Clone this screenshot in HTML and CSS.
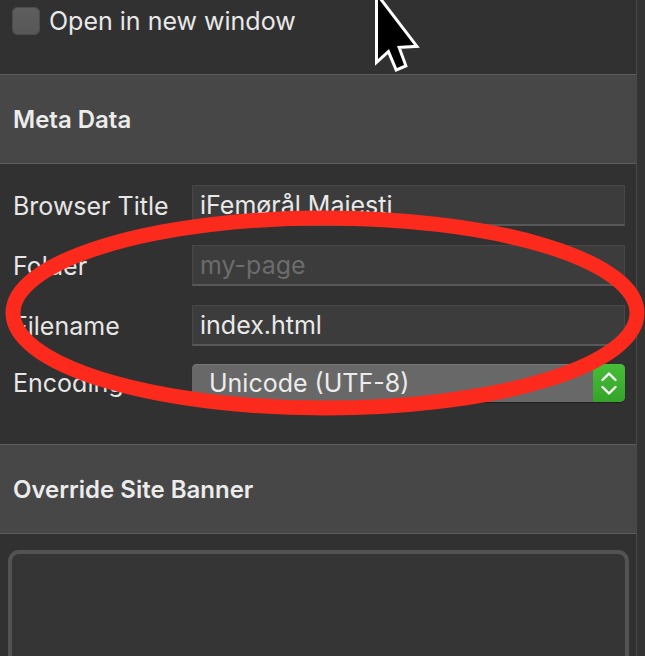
FILE: index.html
```html
<!DOCTYPE html>
<html>
<head>
<meta charset="utf-8">
<link rel="stylesheet" href="styles.css">
</head>
<body>
<div class="window">
  <div class="panel">
    <section class="top">
      <label class="check"><span class="box"></span><span class="check-text">Open in new window</span></label>
    </section>
    <header class="section-head">Meta Data</header>
    <section class="form">
      <div class="row">
        <span class="label">Browser Title</span>
        <div class="input"><span class="value">iFemørål Majesti</span></div>
      </div>
      <div class="row">
        <span class="label">Folder</span>
        <div class="input"><span class="placeholder">my-page</span></div>
      </div>
      <div class="row">
        <span class="label">Filename</span>
        <div class="input"><span class="value">index.html</span></div>
      </div>
      <div class="row select-row">
        <span class="label">Encoding</span>
        <div class="select">
          <span class="select-text">Unicode (UTF-8)</span>
          <span class="stepper">
            <svg width="32" height="38" viewBox="0 0 32 38"><path d="M9.5 16 L16 9.5 L22.5 16 M9.5 23 L16 29.5 L22.5 23" fill="none" stroke="#ffffff" stroke-width="2.4" stroke-linecap="round" stroke-linejoin="round"/></svg>
          </span>
        </div>
      </div>
    </section>
    <header class="section-head">Override Site Banner</header>
    <section class="banner">
      <div class="textarea"></div>
    </section>
  </div>
  <div class="strip"></div>
</div>
<svg class="overlay" width="645" height="656" viewBox="0 0 645 656">
  <ellipse cx="325" cy="313" rx="312" ry="95" fill="none" stroke="#fc2a1c" stroke-width="15"/>
  <path d="M378 -2 L378 59 L389 49 L397 68 L404 65 L397 46 L414 45 Z" fill="#000" stroke="#fff" stroke-width="6" stroke-linejoin="miter" paint-order="stroke"/>
</svg>
</body>
</html>
```

FILE: styles.css
```css
html, body {
  margin: 0;
  padding: 0;
}
body {
  width: 645px;
  height: 656px;
  overflow: hidden;
  background: #313131;
  font-family: "Inter", "Liberation Sans", sans-serif;
  color: #e6e6e6;
  position: relative;
}
.window {
  display: flex;
  height: 656px;
  overflow: hidden;
}
.panel {
  width: 636px;
  height: 656px;
  flex-shrink: 0;
  display: flex;
  flex-direction: column;
  overflow: hidden;
}
.strip {
  flex: 1;
  border-left: 1px solid #484848;
  background: #333333;
}
.top {
  flex-shrink: 0;
  height: 75px;
  box-sizing: border-box;
  border-bottom: 1px solid #5c5c5c;
}
.check {
  display: flex;
  align-items: center;
  padding: 7px 0 0 12px;
  gap: 9px;
}
.box {
  width: 28px;
  height: 28px;
  border-radius: 6px;
  background: linear-gradient(#5e5e5e, #575757);
  box-shadow: inset 0 0 0 1px #4c4c4c;
}
.check-text {
  font-size: 25px;
  line-height: 28px;
  color: #e8e8e8;
}
.section-head {
  flex-shrink: 0;
  height: 89px;
  box-sizing: border-box;
  background: #474747;
  border-bottom: 1px solid #5c5c5c;
  display: flex;
  align-items: center;
  padding-left: 13px;
  font-size: 24px;
  font-weight: 600;
  color: #ececec;
}
.form {
  flex-shrink: 0;
  height: 281px;
  box-sizing: border-box;
  border-bottom: 1px solid #5c5c5c;
  padding: 21px 11px 0 13px;
  display: flex;
  flex-direction: column;
  gap: 19px;
}
.row {
  display: flex;
  align-items: center;
}
.select-row {
  margin-top: -1px;
}
.label {
  width: 179px;
  flex-shrink: 0;
  font-size: 25px;
  color: #e6e6e6;
}
.input {
  flex: 1;
  height: 41px;
  box-sizing: border-box;
  background: #3c3c3c;
  border: 1px solid #474747;
  border-bottom: 2px solid #585858;
  display: flex;
  align-items: center;
  padding-left: 7px;
  font-size: 25px;
  white-space: nowrap;
  overflow: hidden;
}
.value {
  color: #e9e9e9;
}
.placeholder {
  color: #6c6c6c;
}
.select {
  flex: 1;
  height: 38px;
  border-radius: 5px;
  background: #686868;
  box-shadow: inset 0 1px 0 #787878, 0 1px 1px rgba(0,0,0,0.35);
  display: flex;
  align-items: center;
  overflow: hidden;
}
.select-text {
  flex: 1;
  padding-left: 17px;
  font-size: 25px;
  color: #ececec;
}
.stepper {
  flex-shrink: 0;
  width: 32px;
  height: 38px;
  background: linear-gradient(#47bd38, #35a42a);
  display: flex;
}
.banner {
  flex: 1;
  min-height: 0;
  overflow: hidden;
  padding: 16px 7px 0 8px;
}
.textarea {
  height: 200px;
  border: 4px solid #535353;
  border-radius: 11px;
  background: #353535;
}
.overlay {
  position: absolute;
  left: 0;
  top: 0;
  pointer-events: none;
}
```
